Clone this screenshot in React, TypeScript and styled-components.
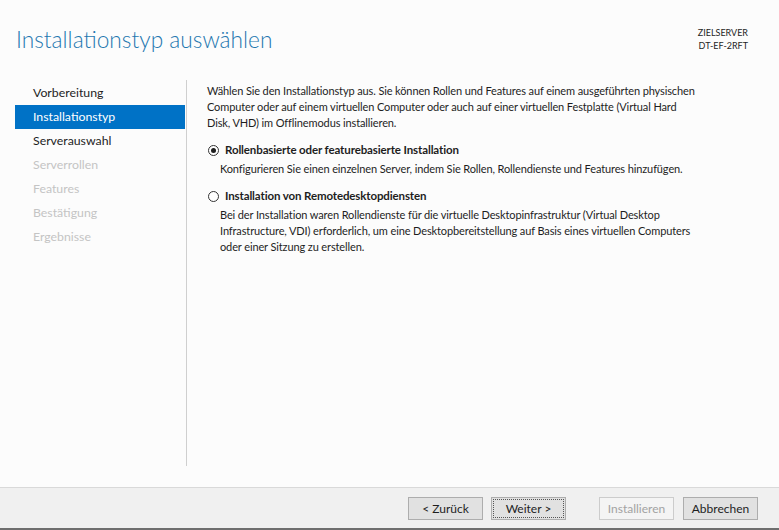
import React from 'react'
import styled, { createGlobalStyle } from 'styled-components'

const GlobalStyle = createGlobalStyle`
  html, body {
    margin: 0;
    padding: 0;
    background: #fcfcfc;
  }
  body {
    font-family: "Lato", "Noto Sans", sans-serif;
    font-size: 12px;
    color: #1e1e1e;
  }
`

const Window = styled.div`
  width: 779px;
  height: 530px;
  display: flex;
  flex-direction: column;
  background: #fcfcfc;
  overflow: hidden;
`

const Header = styled.header`
  height: 80px;
  display: flex;
  justify-content: space-between;
  align-items: flex-start;
  padding: 0 31px 0 16px;
  box-sizing: border-box;
`

const Title = styled.h1`
  margin: 26px 0 0 0;
  font-family: "Lato", sans-serif;
  font-weight: 300;
  font-size: 22.7px;
  color: #1f78b0;
`

const Target = styled.div`
  margin-top: 26px;
  font-size: 9px;
  line-height: 13px;
  text-align: right;
  color: #1e1e1e;
`

const Body = styled.div`
  flex: 1;
  display: flex;
  padding-bottom: 21px;
`

const Sidebar = styled.nav`
  width: 171px;
  margin-left: 15px;
  padding-top: 1px;
  border-right: 1px solid #cfcfcf;
  display: flex;
  flex-direction: column;
`

const Step = styled.div<{ $state: 'done' | 'active' | 'todo' }>`
  height: 24px;
  line-height: 24px;
  padding-left: 18px;
  margin-right: 1px;
  font-size: 12.3px;
  background: ${({ $state }) => ($state === 'active' ? '#0072c6' : 'transparent')};
  color: ${({ $state }) =>
    $state === 'active' ? '#ffffff' : $state === 'todo' ? '#c4c4c4' : '#1e1e1e'};
`

const Content = styled.main`
  flex: 1;
  padding: 3px 10px 0 20px;
  font-size: 11px;
  letter-spacing: -0.12px;
`

const Paragraph = styled.p`
  margin: 0;
  line-height: 16px;
  white-space: nowrap;
`

const Option = styled.div`
  margin-top: 11px;
`

const OptionLabel = styled.label`
  display: flex;
  align-items: center;
  gap: 6px;
  font-weight: 700;
  font-size: 11.5px;
  line-height: 16px;
`

const Radio = styled.span<{ $checked?: boolean }>`
  width: 11px;
  height: 11px;
  box-sizing: border-box;
  border: 1px solid #333333;
  border-radius: 50%;
  background: #ffffff;
  display: inline-flex;
  align-items: center;
  justify-content: center;
  margin-left: 1px;

  &::after {
    content: '';
    width: 5px;
    height: 5px;
    border-radius: 50%;
    background: ${({ $checked }) => ($checked ? '#1e1e1e' : 'transparent')};
  }
`

const OptionText = styled.p`
  margin: 3px 0 0 13px;
  line-height: 16px;
  white-space: nowrap;
`

const Footer = styled.footer`
  height: 43px;
  box-sizing: border-box;
  border-top: 1px solid #d9d9d9;
  border-bottom: 2px solid #6e6e6e;
  background: #f0f0f0;
  display: flex;
  justify-content: flex-end;
  align-items: flex-start;
  padding: 9px 21px 0 0;
`

const Button = styled.button<{ $focus?: boolean; $gapLeft?: number }>`
  width: 75px;
  height: 23px;
  margin-left: ${({ $gapLeft }) => $gapLeft ?? 8}px;
  box-sizing: border-box;
  border: 1px solid #adadad;
  background: #e1e1e1;
  font-family: "Lato", "Noto Sans", sans-serif;
  font-size: 12px;
  color: #1e1e1e;
  padding: 0;
  position: relative;

  ${({ $focus }) =>
    $focus &&
    `
    &::after {
      content: '';
      position: absolute;
      inset: 1px;
      border: 1px dotted #555;
    }
  `}

  &:disabled {
    background: #f4f4f4;
    border-color: #cccccc;
    color: #a3a3a3;
  }
`

const steps: { label: string; state: 'done' | 'active' | 'todo' }[] = [
  { label: 'Vorbereitung', state: 'done' },
  { label: 'Installationstyp', state: 'active' },
  { label: 'Serverauswahl', state: 'done' },
  { label: 'Serverrollen', state: 'todo' },
  { label: 'Features', state: 'todo' },
  { label: 'Bestätigung', state: 'todo' },
  { label: 'Ergebnisse', state: 'todo' },
]

export default function App() {
  return (
    <Window>
      <GlobalStyle />
      <Header>
        <Title>Installationstyp auswählen</Title>
        <Target>
          ZIELSERVER
          <br />
          DT-EF-2RFT
        </Target>
      </Header>
      <Body>
        <Sidebar>
          {steps.map((s) => (
            <Step key={s.label} $state={s.state}>
              {s.label}
            </Step>
          ))}
        </Sidebar>
        <Content>
          <Paragraph>
            Wählen Sie den Installationstyp aus. Sie können Rollen und Features auf einem ausgeführten physischen
            <br />
            Computer oder auf einem virtuellen Computer oder auch auf einer virtuellen Festplatte (Virtual Hard
            <br />
            Disk, VHD) im Offlinemodus installieren.
          </Paragraph>
          <Option>
            <OptionLabel>
              <Radio $checked />
              Rollenbasierte oder featurebasierte Installation
            </OptionLabel>
            <OptionText>
              Konfigurieren Sie einen einzelnen Server, indem Sie Rollen, Rollendienste und Features hinzufügen.
            </OptionText>
          </Option>
          <Option>
            <OptionLabel>
              <Radio />
              Installation von Remotedesktopdiensten
            </OptionLabel>
            <OptionText>
              Bei der Installation waren Rollendienste für die virtuelle Desktopinfrastruktur (Virtual Desktop
              <br />
              Infrastructure, VDI) erforderlich, um eine Desktopbereitstellung auf Basis eines virtuellen Computers
              <br />
              oder einer Sitzung zu erstellen.
            </OptionText>
          </Option>
        </Content>
      </Body>
      <Footer>
        <Button>&lt; Zurück</Button>
        <Button $focus>Weiter &gt;</Button>
        <Button $gapLeft={33} disabled>
          Installieren
        </Button>
        <Button $gapLeft={9}>Abbrechen</Button>
      </Footer>
    </Window>
  )
}
